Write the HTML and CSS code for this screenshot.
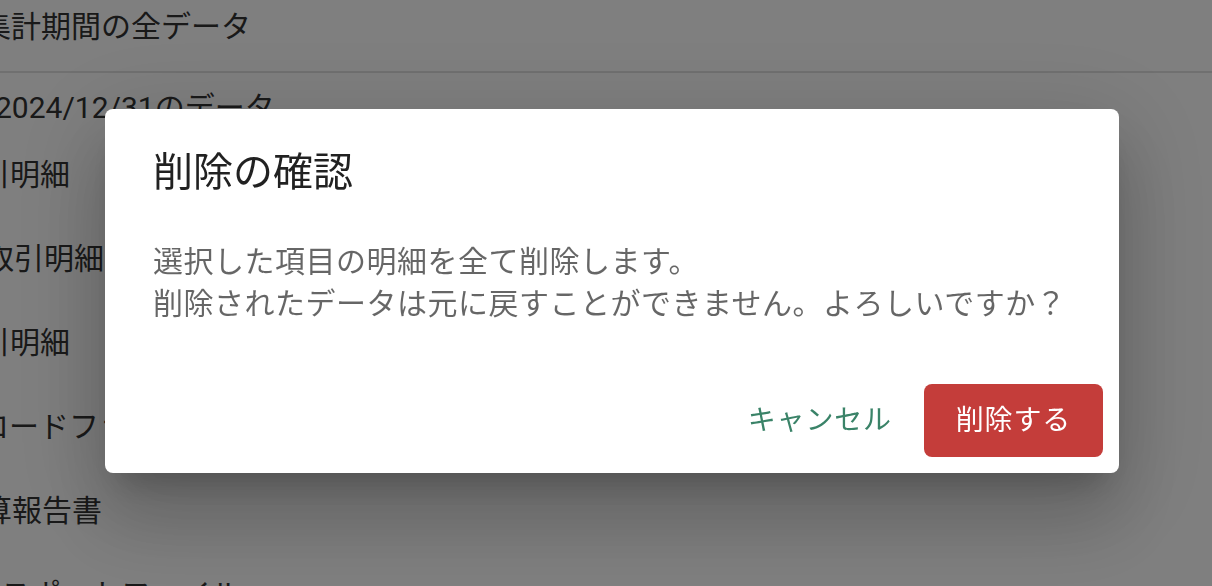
FILE: index.html
```html
<!DOCTYPE html>
<html lang="ja">
<head>
<meta charset="utf-8">
<title>削除の確認</title>
<link rel="stylesheet" href="styles.css">
</head>
<body>
<div class="page">
  <ul class="list">
    <li class="item item-top"><span class="label l1">集計期間の全データ</span></li>
    <li class="divider"></li>
    <li class="subheader"><span class="label l2">2024/12/31のデータ</span></li>
    <li class="item"><span class="label l3">カード取引明細</span></li>
    <li class="item"><span class="label l4">銀行取引明細</span></li>
    <li class="item"><span class="label l5">現金取引明細</span></li>
    <li class="item"><span class="label l6">ダウンロードファイル</span></li>
    <li class="item"><span class="label l7">決算報告書</span></li>
    <li class="item"><span class="label l8">エクスポートファイル</span></li>
  </ul>
</div>
<div class="backdrop">
  <div class="dialog" role="dialog" aria-labelledby="dlg-title">
    <h2 class="dialog-title" id="dlg-title">削除の確認</h2>
    <div class="dialog-content">
      <p class="dialog-text">選択した項目の明細を全て削除します。<br>削除されたデータは元に戻すことができません。よろしいですか？</p>
    </div>
    <div class="dialog-actions">
      <button class="btn btn-text" type="button">キャンセル</button>
      <button class="btn btn-danger" type="button">削除する</button>
    </div>
  </div>
</div>
</body>
</html>
```
FILE: styles.css
```css
* { box-sizing: border-box; }
html, body { margin: 0; height: 100%; }
body {
  background: #ffffff;
  font-family: Roboto, "Noto Sans CJK JP", sans-serif;
  overflow: hidden;
}
.page { width: 100%; height: 100%; overflow: hidden; }
.list {
  list-style: none;
  margin: 0 0 0 -200px;
  padding: 0;
  color: #333333;
  font-size: 30px;
  line-height: 45px;
}
.label { display: block; white-space: nowrap; }
.item { padding: 19px 0 20px; }
.item-top { padding: 4px 0 22px; }
.divider { height: 2px; background: #e0e0e0; margin-right: -200px; }
.subheader { padding: 12px 0 3px; }
.l1 { padding-left: 181px; }
.l2 { padding-left: 195px; }
.l3 { padding-left: 60px; }
.l4 { padding-left: 124px; }
.l5 { padding-left: 90px; }
.l6 { padding-left: 89px; }
.l7 { padding-left: 152px; }
.l8 { padding-left: 142px; }

.backdrop {
  position: fixed;
  inset: 0;
  background: rgba(0, 0, 0, 0.5);
  display: flex;
  align-items: center;
  justify-content: center;
  padding: 0 0 4px 12px;
}
.dialog {
  width: 1014px;
  background: #ffffff;
  border-radius: 8px;
  box-shadow: 0 22px 30px -14px rgba(0, 0, 0, 0.2),
              0 48px 76px 6px rgba(0, 0, 0, 0.14),
              0 18px 92px 16px rgba(0, 0, 0, 0.12);
  display: flex;
  flex-direction: column;
}
.dialog-title {
  margin: 0;
  padding: 32px 48px 0;
  font-size: 40px;
  line-height: 64px;
  font-weight: 400;
  color: rgba(0, 0, 0, 0.87);
}
.dialog-content { padding: 36px 48px 43px; }
.dialog-text {
  margin: 0;
  font-size: 30px;
  line-height: 42px;
  letter-spacing: 0.5px;
  white-space: nowrap;
  color: rgba(0, 0, 0, 0.6);
}
.dialog-actions {
  display: flex;
  justify-content: flex-end;
  align-items: center;
  gap: 16px;
  padding: 16px;
}
.btn {
  font-family: inherit;
  font-size: 28px;
  line-height: 49px;
  letter-spacing: 0.8px;
  font-weight: 400;
  border: none;
  border-radius: 8px;
  cursor: pointer;
}
.btn-text {
  background: transparent;
  color: #3a8368;
  padding: 12px 16px;
}
.btn-danger {
  background: #c43d3a;
  color: #ffffff;
  padding: 12px 32px;
}
```
